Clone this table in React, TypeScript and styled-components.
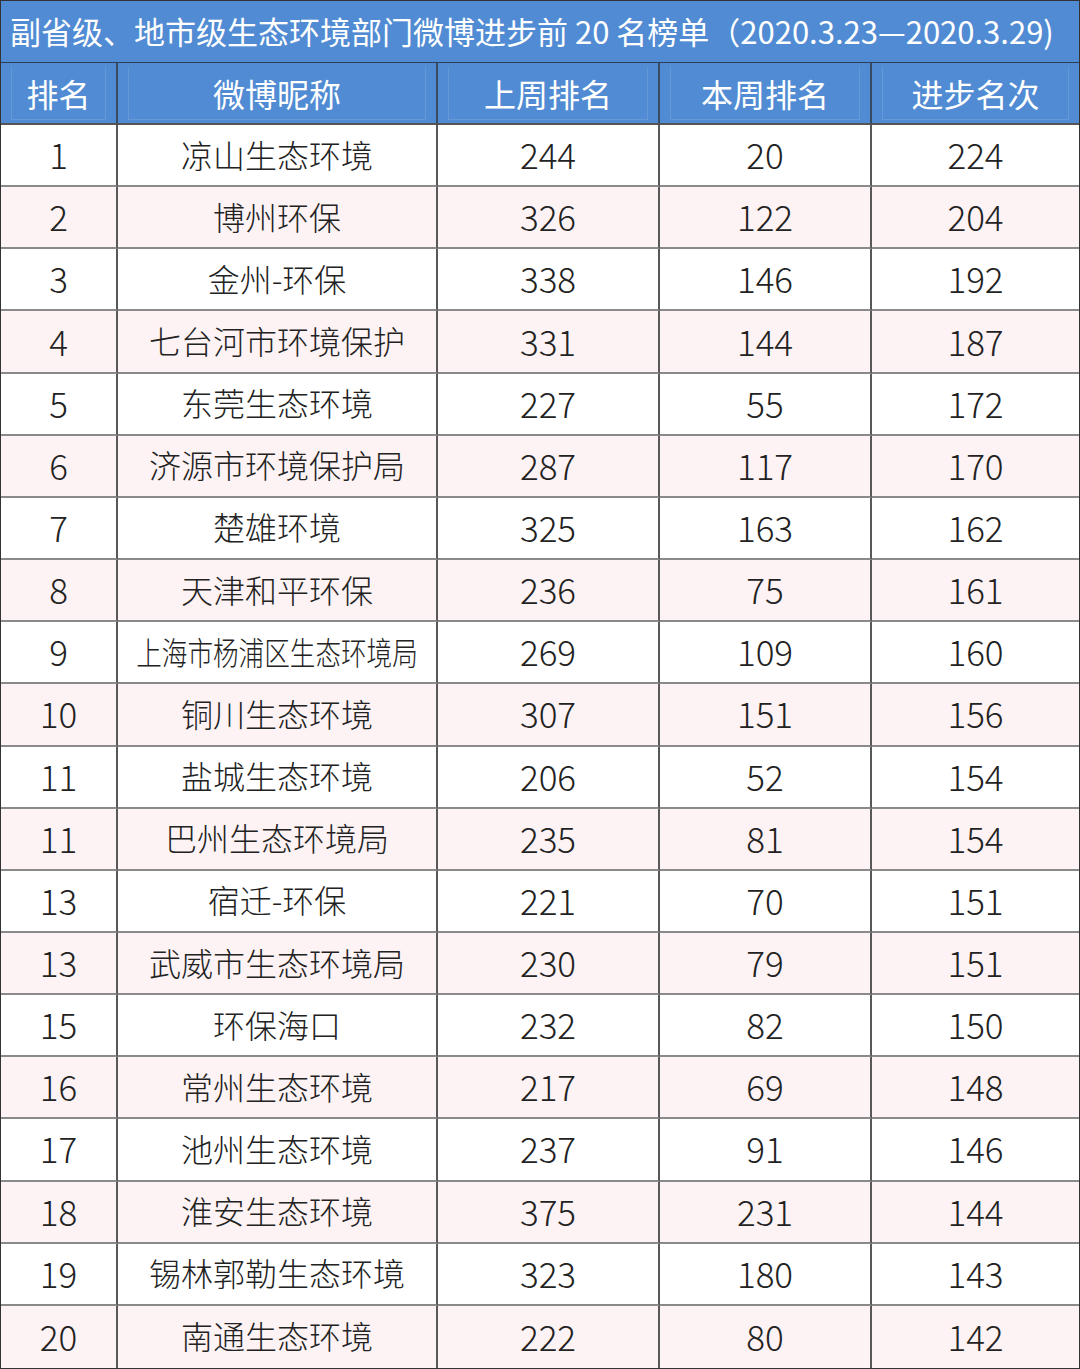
import React from "react";
import styled, { createGlobalStyle } from "styled-components";

const GlobalStyle = createGlobalStyle`
  html, body {
    margin: 0;
    padding: 0;
    background: #ffffff;
  }
  body {
    font-family: "Noto Sans CJK SC", "Noto Sans", sans-serif;
  }
`;

const BLUE = "#508bd3";

const Board = styled.div`
  width: 1080px;
  height: 1369px;
  box-sizing: border-box;
  border: 1px solid #333;
  display: flex;
  flex-direction: column;
`;

const TitleBar = styled.div`
  height: 62px;
  flex: none;
  box-sizing: border-box;
  background: ${BLUE};
  border-bottom: 1px solid #2c3e55;
  color: #fff;
  display: flex;
  align-items: center;
  padding-left: 9px;
  padding-bottom: 2px;
  font-size: 31px;
  font-weight: 400;
  white-space: nowrap;
  letter-spacing: 0;
`;

const Grid = styled.div`
  flex: 1;
  display: grid;
  grid-template-columns: 117px 320px 222px 212px 1fr;
  grid-template-rows: 62px repeat(20, 1fr);
`;

const HeadCell = styled.div<{ $last?: boolean }>`
  position: relative;
  background: ${BLUE};
  color: #fff;
  font-size: 32px;
  font-weight: 400;
  display: flex;
  align-items: center;
  justify-content: center;
  box-sizing: border-box;
  border-right: ${(p) => (p.$last ? "none" : "2px solid #3a4a60")};
  border-bottom: 2px solid #555;

  &::before {
    content: "";
    position: absolute;
    top: 4px;
    bottom: 3px;
    left: 10px;
    right: 10px;
    border-left: 1px solid rgba(255, 255, 255, 0.12);
    border-right: 1px solid rgba(255, 255, 255, 0.12);
    border-bottom: 1px solid rgba(255, 255, 255, 0.12);
    pointer-events: none;
  }
`;

const Cell = styled.div<{ $pink: boolean; $last?: boolean; $bottom?: boolean; $num?: boolean }>`
  background: ${(p) => (p.$pink ? "#fdf2f4" : "#ffffff")};
  color: #222;
  font-size: ${(p) => (p.$num ? "35px" : "32px")};
  font-weight: 300;
  display: flex;
  align-items: center;
  justify-content: center;
  padding-bottom: 3px;
  box-sizing: border-box;
  border-right: ${(p) => (p.$last ? "none" : "2px solid #585858")};
  border-bottom: ${(p) => (p.$bottom ? "none" : "2px solid #8a8a8a")};
  white-space: nowrap;
  overflow: hidden;
`;

const Squeezed = styled.span`
  display: inline-block;
  transform: scaleX(0.8);
`;

type Row = [string, string, number, number, number];

const rows: Row[] = [
  ["1", "凉山生态环境", 244, 20, 224],
  ["2", "博州环保", 326, 122, 204],
  ["3", "金州-环保", 338, 146, 192],
  ["4", "七台河市环境保护", 331, 144, 187],
  ["5", "东莞生态环境", 227, 55, 172],
  ["6", "济源市环境保护局", 287, 117, 170],
  ["7", "楚雄环境", 325, 163, 162],
  ["8", "天津和平环保", 236, 75, 161],
  ["9", "上海市杨浦区生态环境局", 269, 109, 160],
  ["10", "铜川生态环境", 307, 151, 156],
  ["11", "盐城生态环境", 206, 52, 154],
  ["11", "巴州生态环境局", 235, 81, 154],
  ["13", "宿迁-环保", 221, 70, 151],
  ["13", "武威市生态环境局", 230, 79, 151],
  ["15", "环保海口", 232, 82, 150],
  ["16", "常州生态环境", 217, 69, 148],
  ["17", "池州生态环境", 237, 91, 146],
  ["18", "淮安生态环境", 375, 231, 144],
  ["19", "锡林郭勒生态环境", 323, 180, 143],
  ["20", "南通生态环境", 222, 80, 142],
];

const headers = ["排名", "微博昵称", "上周排名", "本周排名", "进步名次"];

export default function App() {
  return (
    <>
      <GlobalStyle />
      <Board>
        <TitleBar>副省级、地市级生态环境部门微博进步前 20 名榜单（2020.3.23—2020.3.29)</TitleBar>
        <Grid>
          {headers.map((h, i) => (
            <HeadCell key={h} $last={i === headers.length - 1}>
              {h}
            </HeadCell>
          ))}
          {rows.map((r, ri) => {
            const pink = ri % 2 === 1;
            const bottom = ri === rows.length - 1;
            return r.map((v, ci) => (
              <Cell
                key={ri + "-" + ci}
                $pink={pink}
                $last={ci === 4}
                $bottom={bottom}
                $num={ci !== 1}
              >
                {ci === 1 && String(v).length > 9 ? <Squeezed>{v}</Squeezed> : v}
              </Cell>
            ));
          })}
        </Grid>
      </Board>
    </>
  );
}
